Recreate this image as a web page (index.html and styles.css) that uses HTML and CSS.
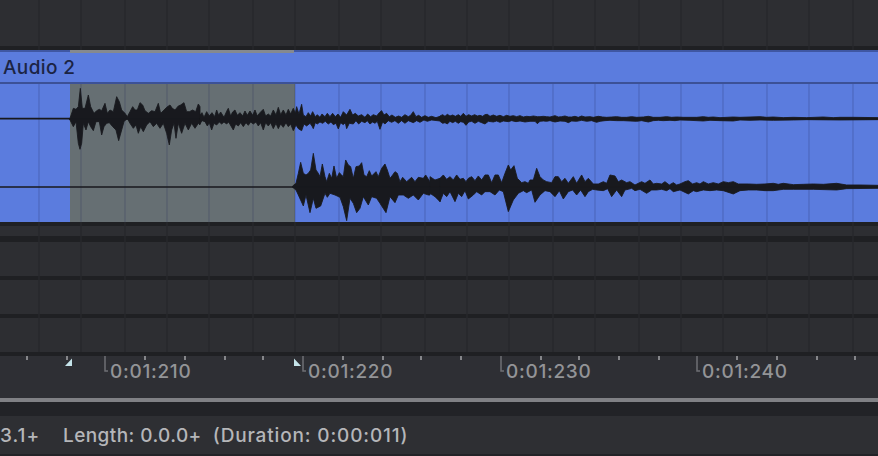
FILE: index.html
```html
<!DOCTYPE html>
<html lang="en">
<head>
<meta charset="utf-8">
<title>Audio 2</title>
<link rel="stylesheet" href="styles.css">
</head>
<body>
<div class="arrangement">
  <svg class="grid grid-dark" width="878" height="352" viewBox="0 0 878 352" aria-hidden="true">
    <g id="gridlines">
      <path d="M39 0V352M81 0V352M125 0V352M167 0V352M209 0V352M253 0V352M295 0V352M339 0V352M381 0V352M425 0V352M467 0V352M509 0V352M553 0V352M595 0V352M639 0V352M681 0V352M723 0V352M767 0V352M809 0V352M853 0V352"/>
    </g>
  </svg>
  <div class="track track-top"></div>
  <div class="clip">
    <div class="clip-head"><span class="clip-name">Audio 2</span><span class="clip-marker"></span></div>
    <div class="clip-body">
      <div class="selection"></div>
      <svg class="wave" width="878" height="138" viewBox="0 84 878 138" aria-hidden="true">
        <use href="#gridlines" class="grid-clip"/>
        <path class="center" d="M0 118.6H878M0 187H878"/>
        <!-- left channel -->
        <g transform="translate(50 80) scale(.3333)">
          <path class="peak" d="M57 117L60 115 70 85 78 88 85 80 91 25 97 85 105 85 115 45 122 80 132 100 140 92 148 88 155 92 165 70 172 100 180 90 190 95 200 50 208 65 215 90 225 100 232 110 240 95 248 80 255 90 262 90 270 68 278 75 285 92 295 100 305 92 315 95 325 70 332 100 342 90 350 82 360 75 367 85 375 90 385 78 392 75 402 68 410 95 418 95 428 90 437 95 445 72 450 80V117Z"/>
          <path class="peak" d="M57 117L60 120 70 140 78 125 85 190 90 208 95 190 100 130 108 150 115 125 122 140 130 152 138 125 148 125 155 165 162 140 170 130 178 128 188 140 198 150 206 182 215 150 222 125 232 115 240 130 250 145 258 135 265 160 272 140 280 155 290 135 300 125 310 140 320 130 330 145 340 130 350 160 358 195 365 150 372 130 378 175 385 130 395 160 405 130 415 150 425 130 435 145 445 130 450 135V117Z"/>
        </g>
        <g transform="scale(.3333)">
          <path class="peak" d="M600 356V345L606 338 612 352 620 335 628 348 636 338 644 350 650 330 656 346 662 336 672 352 680 334 685 325 692 348 698 336 705 330 712 346 720 338 728 348 735 333 742 346 750 333 758 346 765 330 772 348 780 338 790 328 797 348 805 342 812 348 820 330 828 345 835 322 842 344 850 330 858 345 865 328 872 342 880 325 886 340 890 320 897 342 905 313 910 345 918 350 925 338 932 348 938 335 946 350 952 344 960 352 966 342 975 350 982 340 990 350 998 340 1006 350 1014 342 1022 352 1030 335 1040 345 1050 328 1058 345 1066 340 1075 348 1085 344 1095 352 1103 342 1112 350 1120 344 1130 348 1138 338 1145 332 1152 345 1160 340 1168 350 1176 345 1186 352 1196 348 1205 352 1215 344 1225 350 1232 346 1240 335 1248 350 1256 346 1265 352 1275 347 1285 352 1295 349 1308 353 1320 349V356Z"/>
          <path class="peak" d="M600 356V372L606 362 615 365 622 378 628 368 635 390 642 370 650 375 658 366 665 372 672 366 680 372 686 366 693 378 700 390 707 372 715 378 722 368 730 380 738 368 745 376 752 366 760 372 768 366 775 378 782 368 790 390 797 368 805 378 812 368 820 386 828 370 835 386 842 372 850 382 858 368 865 380 872 372 880 392 888 375 895 386 905 392 912 372 920 378 930 370 936 378 940 386 946 368 952 372 960 366 968 370 976 364 985 372 993 366 1000 374 1008 370 1015 387 1022 368 1030 374 1036 368 1040 386 1048 370 1060 372 1068 362 1076 372 1085 364 1095 368 1102 362 1110 372 1118 366 1125 370 1132 364 1140 388 1148 366 1155 372 1165 362 1175 367 1185 362 1195 370 1205 362 1215 370 1225 362 1240 368 1250 362 1260 367 1272 360 1282 364 1295 360 1320 363V356Z"/>
        </g>
        <g transform="translate(440 0) scale(.3333)">
          <path class="peak" d="M0 356V348L8 344 15 349 22 343 30 348 38 345 46 349 55 344 62 349 70 340 78 349 86 344 95 348 104 344 112 348 120 346 128 349 135 344 142 343 150 349 160 345 170 349 180 346 190 350 200 346 210 349 220 347 230 350 240 347 250 351 260 349 270 350 280 348 292 350 300 350 310 349 320 350 330 351 345 347 355 351 365 350 375 348 385 351 395 351 405 349 415 352 425 348 435 351 450 350 460 352 475 349 488 351 500 352 515 351 530 350 545 352 560 352 575 350 590 352 610 351 625 349 640 352 660 352 680 350 695 352 710 351 730 352 750 352 770 352 790 350 805 352 820 351 840 353 880 351 900 352 930 351 960 350 980 352 1000 351 1030 353 1060 352 1100 353 1150 351 1180 353 1200 352 1240 352 1314 353V356Z"/>
          <path class="peak" d="M0 356V364L8 370 15 368 22 372 30 364 38 368 46 364 55 370 62 365 70 367 78 376 86 366 95 364 105 370 115 364 125 368 135 372 145 364 160 366 170 363 180 367 190 363 205 365 215 362 228 365 240 363 255 366 270 364 285 364 292 371 300 364 310 363 320 364 330 362 345 366 360 363 375 364 385 368 395 363 410 364 425 361 440 364 455 362 470 367 480 364 495 362 510 361 530 362 550 362 570 363 590 364 605 362 625 366 640 362 655 361 670 362 690 361 705 362 720 360 750 361 790 363 810 361 840 362 880 363 900 360 930 361 960 360 1000 361 1060 360 1100 359 1200 360 1314 359V356Z"/>
        </g>
        <!-- right channel -->
        <g transform="translate(280 140) scale(.3333)">
          <path class="peak" d="M38 141V138L48 130 55 100 62 67 70 100 78 105 85 100 92 90 100 40 108 90 115 100 120 110 127 72 135 110 140 125 148 100 155 115 162 78 170 115 178 98 185 105 190 110 197 60 205 75 212 80 220 115 228 80 238 78 245 68 252 105 260 110 268 92 275 108 288 95 295 110 305 85 315 72 322 90 330 115 338 105 345 95 352 100 360 125 368 112 380 125 395 112 405 125 415 112 430 115 437 105 450 125V141Z"/>
          <path class="peak" d="M38 141V142L48 150 55 165 70 198 78 165 90 218 100 175 108 205 122 198 135 160 142 172 150 160 165 165 180 172 190 200 200 242 210 175 220 190 230 218 240 205 250 170 265 195 275 170 290 175 300 190 318 218 330 170 345 188 355 165 370 165 385 175 400 165 415 180 430 160 445 165 450 165V141Z"/>
        </g>
        <g transform="translate(430 0) scale(.3333)">
          <path class="peak" d="M0 561V530L15 540 30 535V561Z"/>
          <path class="peak" d="M0 561V580L15 590 30 605V561Z"/>
        </g>
        <g transform="translate(440 0) scale(.3333)">
          <path class="peak" d="M0 561V535L10 525 20 538 30 530 40 540 50 525 60 538 70 535 78 545 85 535 95 530 105 542 115 528 125 540 135 525 145 525 155 548 165 525 175 525 185 548 195 520 205 495 212 510 222 497 232 535 245 548 255 545 265 550 270 540 280 540 290 505 300 530 310 540 320 545 335 548 345 530 355 530 365 545 375 535 385 550 400 530 410 550 425 525 435 545 445 535 460 552 475 552 490 545 500 550 510 525 525 528 535 545 545 540 560 548 570 545 585 555 595 550 605 545 615 550 630 540 640 552 650 550 665 552 675 545 688 555 700 548 710 555 720 552 735 545 745 542 758 552 770 548 780 552 790 545 805 552 820 548 835 552 850 545 865 548 880 545 895 552 900 552 925 552 950 553 975 552 1000 550 1015 553 1030 550 1060 554 1090 553 1120 552 1150 553 1190 550 1220 555 1260 555 1314 556V561Z"/>
          <path class="peak" d="M0 561V605L10 580 20 590 30 575 45 605 55 580 65 590 75 572 85 597 100 585 110 575 125 585 135 575 150 575 165 585 178 570 190 575 205 635 220 600 235 580 250 572 260 578 275 570 285 607 300 585 315 572 330 575 345 590 358 572 370 597 385 575 398 570 410 585 422 570 435 590 445 575 458 568 470 570 490 572 503 566 515 590 530 570 545 590 555 570 565 568 575 565 585 572 600 568 620 580 635 570 650 570 665 568 680 572 690 566 700 575 720 570 745 582 760 572 770 575 790 570 810 572 830 570 850 572 880 582 900 572 925 570 950 570 975 572 1000 572 1030 568 1060 568 1120 568 1190 570 1220 566 1314 565V561Z"/>
        </g>
      </svg>
    </div>
  </div>
  <div class="track track-thin"></div>
  <div class="track"></div>
  <div class="track"></div>
  <div class="track"></div>
</div>
<div class="ruler">
  <svg class="ruler-marks" width="878" height="42" viewBox="0 356 878 42" aria-hidden="true">
    <path class="tick" d="M27 356V360M67 356V360M145 356V360M185 356V360M225 356V360M263 356V360M343 356V360M383 356V360M421 356V360M461 356V360M541 356V360M579 356V360M619 356V360M659 356V360M737 356V360M777 356V360M817 356V360M855 356V360"/>
    <path class="bracket" d="M105 356V371H108M303 356V371H306M501 356V371H504M697 356V371H700"/>
    <path class="loop" d="M65 366H72V358.5ZM294 358.5V366H301Z"/>
  </svg>
  <span class="time">0:01:210</span>
  <span class="time">0:01:220</span>
  <span class="time">0:01:230</span>
  <span class="time">0:01:240</span>
</div>
<div class="scrollbar"></div>
<div class="status">
  <span class="status-pos">3.1+</span>
  <span class="status-length">Length: 0.0.0+</span>
  <span class="status-duration">(Duration: 0:00:011)</span>
</div>
</body>
</html>
```

FILE: styles.css
```css
* { box-sizing: border-box; }
html, body { margin: 0; height: 100%; }
body {
  width: 878px;
  height: 456px;
  overflow: hidden;
  background: #222327;
  font-family: "Inter", "Liberation Sans", sans-serif;
  font-size: 19px;
  font-weight: 500;
  display: flex;
  flex-direction: column;
}
.arrangement {
  position: relative;
  height: 356px;
  background: #1f2023;
  display: flex;
  flex-direction: column;
  flex: none;
}
.grid {
  position: absolute;
  left: 0;
  top: 0;
  z-index: 1;
  pointer-events: none;
}
.grid-dark { stroke: #27282c; stroke-width: 1.4; fill: none; }
.track {
  height: 34px;
  margin-bottom: 4px;
  background: #2d2e32;
  flex: none;
}
.track-top { height: 46px; }
.track-thin { height: 10px; margin-bottom: 6px; }
.track:last-child { margin-bottom: 0; }
.clip {
  position: relative;
  z-index: 2;
  height: 172px;
  margin-bottom: 4px;
  background: #5b7cde;
  flex: none;
}
.clip-head {
  position: relative;
  height: 34px;
  padding: 5px 0 0 3px;
  border-top: 2px solid #3f57a3;
  border-bottom: 2px solid #3c5196;
  color: #1b2444;
  line-height: 21px;
  letter-spacing: .4px;
}
.clip-marker {
  position: absolute;
  left: 70px;
  top: -2px;
  width: 224px;
  height: 3px;
  background: #85898f;
}
.clip-body { position: relative; height: 138px; }
.selection {
  position: absolute;
  left: 70px;
  top: 0;
  width: 224.5px;
  height: 138px;
  background: #666f73;
}
.wave { position: absolute; left: 0; top: 0; display: block; }
.grid-clip { stroke: rgba(30, 40, 90, .2); stroke-width: 1.4; fill: none; }
.center { stroke: #18191e; stroke-width: 1.6; fill: none; }
.peak { fill: #18191e; stroke: #18191e; stroke-width: 2.6; stroke-linejoin: round; }
.ruler {
  position: relative;
  height: 42px;
  padding: 4px 0 0 110px;
  background: #2e2f34;
  display: flex;
  align-items: flex-start;
  flex: none;
}
.ruler-marks { position: absolute; left: 0; top: 0; }
.tick { stroke: #85868a; stroke-width: 2; fill: none; }
.bracket { stroke: #6f7074; stroke-width: 1.5; fill: none; }
.loop { fill: #c5e4ea; }
.time {
  width: 198px;
  padding-top: 1px;
  color: #939497;
  line-height: 22px;
  letter-spacing: .7px;
  flex: none;
}
.time:nth-of-type(3) { width: 196px; }
.scrollbar {
  height: 4px;
  background: #808185;
  flex: none;
}
.status {
  margin-top: 14px;
  height: 38px;
  padding-top: 7px;
  background: #2e2f33;
  color: #b5b6b9;
  line-height: 26px;
  display: flex;
  flex: none;
}
.status-pos { width: 63px; letter-spacing: 1px; flex: none; }
.status-length { letter-spacing: .42px; }
.status-duration { margin-left: 11px; letter-spacing: .85px; }
```
